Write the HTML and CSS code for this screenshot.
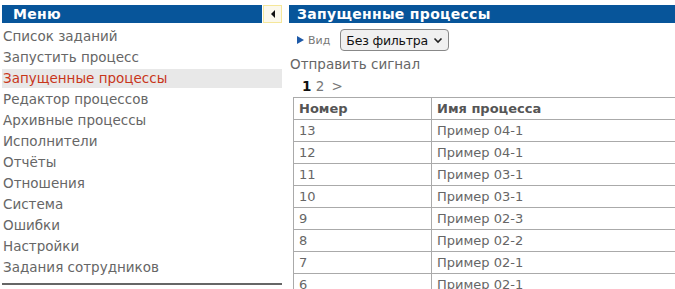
FILE: index.html
```html
<!DOCTYPE html>
<html lang="ru">
<head>
    <meta charset="UTF-8">
    <title>Запущенные процессы</title>
    <link rel="stylesheet" href="styles.css">
</head>
<body>
    <div class="page">
        <div class="sidebar">
            <div class="menu-head">
                <div class="menu-title">Меню</div>
                <div class="menu-toggle"><span class="arrow-left"></span></div>
            </div>
            <ul class="menu">
                <li>Список заданий</li>
                <li>Запустить процесс</li>
                <li class="active">Запущенные процессы</li>
                <li>Редактор процессов</li>
                <li>Архивные процессы</li>
                <li>Исполнители</li>
                <li>Отчёты</li>
                <li>Отношения</li>
                <li>Система</li>
                <li>Ошибки</li>
                <li>Настройки</li>
                <li>Задания сотрудников</li>
            </ul>
            <div class="menu-bottom"></div>
        </div>
        <div class="content">
            <div class="content-title">Запущенные процессы</div>
            <div class="view-row">
                <span class="view-label"><span class="arrow-right"></span>Вид</span>
                <div class="select">Без фильтра
                    <svg width="10" height="7" viewBox="0 0 10 7"><path d="M1.5 1.5 L5 5 L8.5 1.5" fill="none" stroke="#222" stroke-width="1.6"/></svg>
                </div>
            </div>
            <div class="signal">Отправить сигнал</div>
            <div class="pager"><b>1</b> <span>2</span> <span class="next">&gt;</span></div>
            <table class="processes">
                <tr><th class="col-id">Номер</th><th>Имя процесса</th></tr>
                <tr><td>13</td><td>Пример 04-1</td></tr>
                <tr><td>12</td><td>Пример 04-1</td></tr>
                <tr><td>11</td><td>Пример 03-1</td></tr>
                <tr><td>10</td><td>Пример 03-1</td></tr>
                <tr><td>9</td><td>Пример 02-3</td></tr>
                <tr><td>8</td><td>Пример 02-2</td></tr>
                <tr><td>7</td><td>Пример 02-1</td></tr>
                <tr><td>6</td><td>Пример 02-1</td></tr>
            </table>
        </div>
    </div>
</body>
</html>
```
FILE: styles.css
```css
body {
    margin: 0;
    font-family: "DejaVu Sans", sans-serif;
    font-size: 13px;
    color: #666;
    background: #fff;
    overflow: hidden;
}
.page {
    display: flex;
    padding: 5px 0 0 2px;
    gap: 7px;
}
.sidebar {
    width: 280px;
    flex-shrink: 0;
}
.menu-head {
    display: flex;
    height: 18px;
    gap: 1px;
}
.menu-title {
    flex: 1;
    background: #07559a;
    color: #fff;
    font-weight: bold;
    font-size: 14px;
    line-height: 18px;
    padding-left: 11px;
    letter-spacing: 0.3px;
}
.menu-toggle {
    width: 17px;
    height: 16px;
    border: 1px solid #f5e79a;
    background: #fbf8ec;
    display: flex;
    align-items: center;
    justify-content: center;
}
.arrow-left {
    width: 0;
    height: 0;
    border-top: 4px solid transparent;
    border-bottom: 4px solid transparent;
    border-right: 4px solid #111;
}
.menu {
    list-style: none;
    margin: 4px 0 0;
    padding: 0;
}
.menu li {
    line-height: 19px;
    margin-bottom: 2px;
    padding-left: 1px;
    font-size: 13.5px;
}
.menu li.active {
    background: #e8e8e8;
    color: #c8361a;
}
.menu-bottom {
    height: 2px;
    background: #666;
    margin-top: 6px;
}
.content {
    flex: 1;
    min-width: 0;
    overflow: hidden;
}
.content-title {
    background: #07559a;
    color: #fff;
    font-weight: bold;
    font-size: 14px;
    line-height: 18px;
    padding-left: 8px;
    letter-spacing: 0.3px;
}
.view-row {
    display: flex;
    align-items: center;
    margin-top: 6px;
    padding-left: 8px;
    gap: 10px;
}
.view-label {
    font-size: 11px;
    color: #777;
    display: flex;
    align-items: center;
    gap: 4px;
}
.arrow-right {
    width: 0;
    height: 0;
    border-top: 4px solid transparent;
    border-bottom: 4px solid transparent;
    border-left: 7px solid #1e5aa8;
}
.select {
    height: 20px;
    border: 1px solid #888;
    border-radius: 4px;
    background: #f0f0f0;
    color: #111;
    font-size: 12.5px;
    letter-spacing: -0.2px;
    display: flex;
    align-items: center;
    gap: 5px;
    padding: 0 5px;
}
.signal {
    font-size: 13.5px;
    margin-top: 3px;
    padding-left: 1px;
    line-height: 20px;
}
.pager {
    padding-left: 13px;
    line-height: 18px;
    font-size: 13.5px;
    color: #777;
    margin-top: 3px;
}
.pager b {
    color: #111;
}
.pager .next {
    margin-left: 3px;
}
.processes {
    border-collapse: collapse;
    margin-left: 4px;
    width: 420px;
    margin-top: 2px;
}
.processes th, .processes td {
    border: 1px solid #aaa;
    text-align: left;
    padding: 0 5px;
    height: 21px;
    font-size: 13px;
}
.processes th {
    font-weight: bold;
    color: #555;
}
.col-id {
    width: 127px;
}
```
